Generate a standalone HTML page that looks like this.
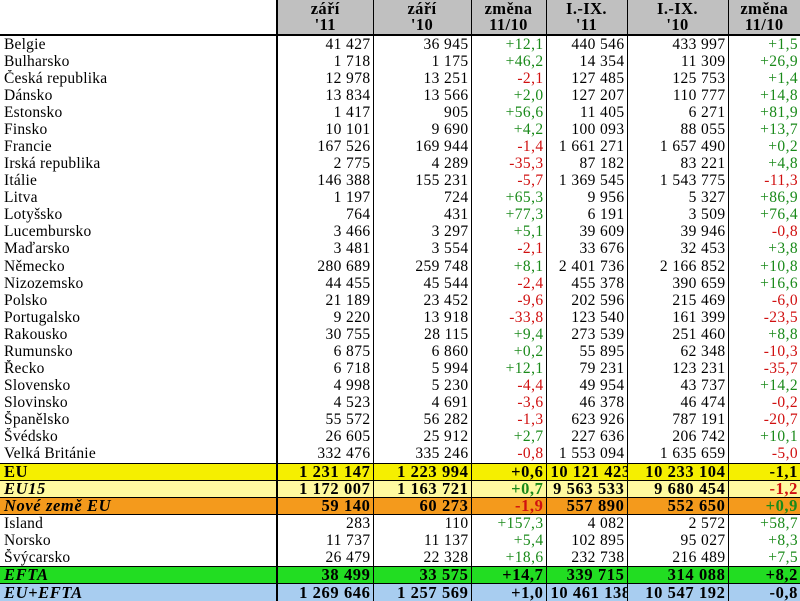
<!DOCTYPE html>
<html><head><meta charset="utf-8"><style>
body{margin:0;width:800px;height:600px;overflow:hidden;background:#fff;font-family:"Liberation Serif",serif;font-size:15.5px;color:#000}
table{border-collapse:collapse;table-layout:fixed;width:800px}
td{padding:0 2px 0 4px;height:17px;line-height:16px;white-space:nowrap;overflow:hidden;text-align:right;letter-spacing:0.4px}
td:first-child{text-align:left;border-right:2px solid #000;letter-spacing:0.2px}
td+td{border-left:1px solid #000}
tr.h td{height:34px;background:#c0c0c0;text-align:center;font-weight:bold;font-size:16.5px;line-height:16px;border-bottom:2px solid #000;padding:0}
tr.h td:first-child{background:#fff}
tr.t td{height:18px}
.g{color:#1a8a1a}.r{color:#d01010}
tr.s td{border-top:1px solid #000;font-weight:bold;height:16px;font-size:16.5px;letter-spacing:0.6px}
tr.eu td{background:#f5ef00}
tr.eu15 td{background:#fffaa0}
tr.nz td{background:#f49a1c}
tr.ef td{background:#22dd22}
tr.ee td{background:#a8cdf0;height:17px}
tr.it td:first-child{font-style:italic}
tr.w td{border-top:1px solid #000}
</style></head><body>
<table>
<colgroup><col style="width:277px"><col style="width:96px"><col style="width:98px"><col style="width:75px"><col style="width:81px"><col style="width:101px"><col style="width:72px"></colgroup>
<tr class="h"><td></td><td>září<br>'11</td><td>září<br>'10</td><td>změna<br>11/10</td><td>I.-IX.<br>'11</td><td>I.-IX.<br>'10</td><td>změna<br>11/10</td></tr>
<tr><td>Belgie</td><td>41 427</td><td>36 945</td><td class="g">+12,1</td><td>440 546</td><td>433 997</td><td class="g">+1,5</td></tr>
<tr><td>Bulharsko</td><td>1 718</td><td>1 175</td><td class="g">+46,2</td><td>14 354</td><td>11 309</td><td class="g">+26,9</td></tr>
<tr><td>Česká republika</td><td>12 978</td><td>13 251</td><td class="r">-2,1</td><td>127 485</td><td>125 753</td><td class="g">+1,4</td></tr>
<tr><td>Dánsko</td><td>13 834</td><td>13 566</td><td class="g">+2,0</td><td>127 207</td><td>110 777</td><td class="g">+14,8</td></tr>
<tr><td>Estonsko</td><td>1 417</td><td>905</td><td class="g">+56,6</td><td>11 405</td><td>6 271</td><td class="g">+81,9</td></tr>
<tr><td>Finsko</td><td>10 101</td><td>9 690</td><td class="g">+4,2</td><td>100 093</td><td>88 055</td><td class="g">+13,7</td></tr>
<tr><td>Francie</td><td>167 526</td><td>169 944</td><td class="r">-1,4</td><td>1 661 271</td><td>1 657 490</td><td class="g">+0,2</td></tr>
<tr><td>Irská republika</td><td>2 775</td><td>4 289</td><td class="r">-35,3</td><td>87 182</td><td>83 221</td><td class="g">+4,8</td></tr>
<tr><td>Itálie</td><td>146 388</td><td>155 231</td><td class="r">-5,7</td><td>1 369 545</td><td>1 543 775</td><td class="r">-11,3</td></tr>
<tr><td>Litva</td><td>1 197</td><td>724</td><td class="g">+65,3</td><td>9 956</td><td>5 327</td><td class="g">+86,9</td></tr>
<tr><td>Lotyšsko</td><td>764</td><td>431</td><td class="g">+77,3</td><td>6 191</td><td>3 509</td><td class="g">+76,4</td></tr>
<tr><td>Lucembursko</td><td>3 466</td><td>3 297</td><td class="g">+5,1</td><td>39 609</td><td>39 946</td><td class="r">-0,8</td></tr>
<tr class="t"><td>Maďarsko</td><td>3 481</td><td>3 554</td><td class="r">-2,1</td><td>33 676</td><td>32 453</td><td class="g">+3,8</td></tr>
<tr><td>Německo</td><td>280 689</td><td>259 748</td><td class="g">+8,1</td><td>2 401 736</td><td>2 166 852</td><td class="g">+10,8</td></tr>
<tr><td>Nizozemsko</td><td>44 455</td><td>45 544</td><td class="r">-2,4</td><td>455 378</td><td>390 659</td><td class="g">+16,6</td></tr>
<tr><td>Polsko</td><td>21 189</td><td>23 452</td><td class="r">-9,6</td><td>202 596</td><td>215 469</td><td class="r">-6,0</td></tr>
<tr><td>Portugalsko</td><td>9 220</td><td>13 918</td><td class="r">-33,8</td><td>123 540</td><td>161 399</td><td class="r">-23,5</td></tr>
<tr><td>Rakousko</td><td>30 755</td><td>28 115</td><td class="g">+9,4</td><td>273 539</td><td>251 460</td><td class="g">+8,8</td></tr>
<tr><td>Rumunsko</td><td>6 875</td><td>6 860</td><td class="g">+0,2</td><td>55 895</td><td>62 348</td><td class="r">-10,3</td></tr>
<tr><td>Řecko</td><td>6 718</td><td>5 994</td><td class="g">+12,1</td><td>79 231</td><td>123 231</td><td class="r">-35,7</td></tr>
<tr><td>Slovensko</td><td>4 998</td><td>5 230</td><td class="r">-4,4</td><td>49 954</td><td>43 737</td><td class="g">+14,2</td></tr>
<tr><td>Slovinsko</td><td>4 523</td><td>4 691</td><td class="r">-3,6</td><td>46 378</td><td>46 474</td><td class="r">-0,2</td></tr>
<tr><td>Španělsko</td><td>55 572</td><td>56 282</td><td class="r">-1,3</td><td>623 926</td><td>787 191</td><td class="r">-20,7</td></tr>
<tr><td>Švédsko</td><td>26 605</td><td>25 912</td><td class="g">+2,7</td><td>227 636</td><td>206 742</td><td class="g">+10,1</td></tr>
<tr class="t"><td>Velká Británie</td><td>332 476</td><td>335 246</td><td class="r">-0,8</td><td>1 553 094</td><td>1 635 659</td><td class="r">-5,0</td></tr>
<tr class="s eu"><td>EU</td><td>1 231 147</td><td>1 223 994</td><td>+0,6</td><td>10 121 423</td><td>10 233 104</td><td>-1,1</td></tr>
<tr class="s eu15 it"><td>EU15</td><td>1 172 007</td><td>1 163 721</td><td class="g">+0,7</td><td>9 563 533</td><td>9 680 454</td><td class="r">-1,2</td></tr>
<tr class="s nz it"><td>Nové země EU</td><td>59 140</td><td>60 273</td><td class="r">-1,9</td><td>557 890</td><td>552 650</td><td class="g">+0,9</td></tr>
<tr class="w"><td>Island</td><td>283</td><td>110</td><td class="g">+157,3</td><td>4 082</td><td>2 572</td><td class="g">+58,7</td></tr>
<tr><td>Norsko</td><td>11 737</td><td>11 137</td><td class="g">+5,4</td><td>102 895</td><td>95 027</td><td class="g">+8,3</td></tr>
<tr><td>Švýcarsko</td><td>26 479</td><td>22 328</td><td class="g">+18,6</td><td>232 738</td><td>216 489</td><td class="g">+7,5</td></tr>
<tr class="s ef it"><td>EFTA</td><td>38 499</td><td>33 575</td><td>+14,7</td><td>339 715</td><td>314 088</td><td>+8,2</td></tr>
<tr class="s ee it"><td>EU+EFTA</td><td>1 269 646</td><td>1 257 569</td><td>+1,0</td><td>10 461 138</td><td>10 547 192</td><td>-0,8</td></tr>
</table>
</body></html>
